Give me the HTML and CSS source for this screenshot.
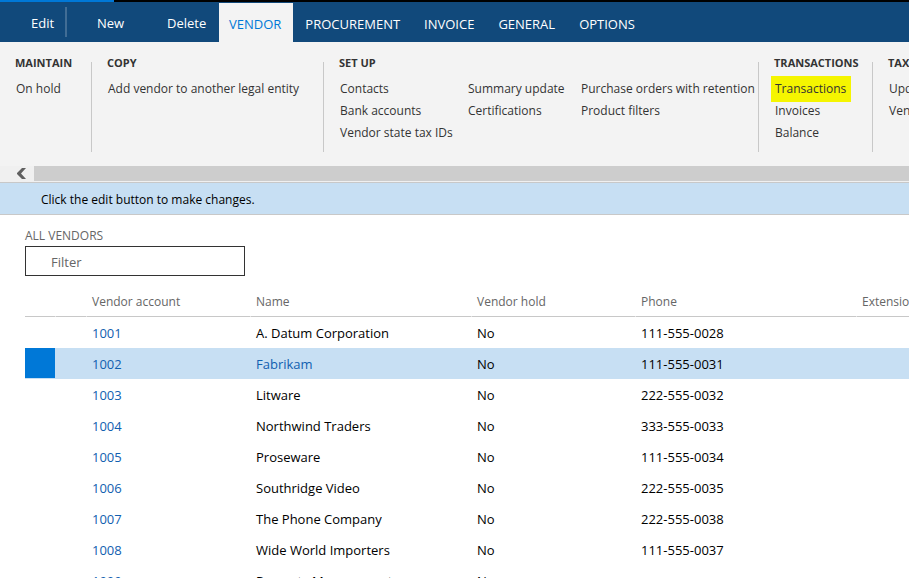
FILE: index.html
```html
<!DOCTYPE html>
<html lang="en">
<head>
<meta charset="utf-8">
<title>All vendors</title>
<link rel="stylesheet" href="styles.css">
</head>
<body>
<div class="progress"><div class="progress-fill"></div></div>
<header class="action-bar">
  <button class="action action-edit" type="button">Edit</button>
  <button class="action action-new" type="button">New</button>
  <button class="action action-delete" type="button">Delete</button>
  <nav class="tabs">
    <a class="tab tab-active" href="#">VENDOR</a>
    <a class="tab" href="#">PROCUREMENT</a>
    <a class="tab" href="#">INVOICE</a>
    <a class="tab" href="#">GENERAL</a>
    <a class="tab" href="#">OPTIONS</a>
  </nav>
</header>
<section class="ribbon">
  <div class="group group-maintain">
    <h2>MAINTAIN</h2>
    <div class="commands"><div class="stack"><button type="button">On hold</button></div></div>
  </div>
  <div class="group group-copy">
    <h2>COPY</h2>
    <div class="commands"><div class="stack"><button type="button">Add vendor to another legal entity</button></div></div>
  </div>
  <div class="group group-setup">
    <h2>SET UP</h2>
    <div class="commands">
      <div class="stack stack-contacts"><button type="button">Contacts</button><button type="button">Bank accounts</button><button type="button">Vendor state tax IDs</button></div>
      <div class="stack stack-summary"><button type="button">Summary update</button><button type="button">Certifications</button></div>
      <div class="stack"><button type="button">Purchase orders with retention</button><button type="button">Product filters</button></div>
    </div>
  </div>
  <div class="group group-transactions">
    <h2>TRANSACTIONS</h2>
    <div class="commands"><div class="stack"><button class="highlight" type="button">Transactions</button><button type="button">Invoices</button><button type="button">Balance</button></div></div>
  </div>
  <div class="group group-tax">
    <h2>TAX</h2>
    <div class="commands"><div class="stack"><button type="button">Update 1099</button><button type="button">Vendor settlement</button></div></div>
  </div>
</section>
<div class="scroller">
  <button class="scroll-left" type="button" aria-label="Scroll left">
    <svg width="10" height="12" viewBox="0 0 10 12"><path d="M5 0H9L4 5.500 9 11H5L0 6V5Z" fill="#606060"/></svg>
  </button>
  <div class="scroll-thumb"></div>
</div>
<p class="message">Click the edit button to make changes.</p>
<main class="content">
  <label class="list-title" for="filter">ALL VENDORS</label>
  <input class="filter" id="filter" type="text" placeholder="Filter">
  <table class="grid">
    <colgroup><col class="col-mark"><col class="col-status"><col class="col-narrow"><col class="col-wide"><col class="col-narrow"><col class="col-wide"><col class="col-narrow"></colgroup>
    <thead><tr><th></th><th></th><th>Vendor account</th><th>Name</th><th>Vendor hold</th><th>Phone</th><th>Extension</th></tr></thead>
    <tbody>
      <tr><td></td><td></td><td><a href="#">1001</a></td><td>A. Datum Corporation</td><td>No</td><td>111-555-0028</td><td></td></tr>
      <tr class="selected"><td><span class="mark"></span></td><td></td><td><a href="#">1002</a></td><td><a href="#">Fabrikam</a></td><td>No</td><td>111-555-0031</td><td></td></tr>
      <tr><td></td><td></td><td><a href="#">1003</a></td><td>Litware</td><td>No</td><td>222-555-0032</td><td></td></tr>
      <tr><td></td><td></td><td><a href="#">1004</a></td><td>Northwind Traders</td><td>No</td><td>333-555-0033</td><td></td></tr>
      <tr><td></td><td></td><td><a href="#">1005</a></td><td>Proseware</td><td>No</td><td>111-555-0034</td><td></td></tr>
      <tr><td></td><td></td><td><a href="#">1006</a></td><td>Southridge Video</td><td>No</td><td>222-555-0035</td><td></td></tr>
      <tr><td></td><td></td><td><a href="#">1007</a></td><td>The Phone Company</td><td>No</td><td>222-555-0038</td><td></td></tr>
      <tr><td></td><td></td><td><a href="#">1008</a></td><td>Wide World Importers</td><td>No</td><td>111-555-0037</td><td></td></tr>
      <tr><td></td><td></td><td><a href="#">1009</a></td><td>Property Management</td><td>No</td><td></td><td></td></tr>
    </tbody>
  </table>
</main>
</body>
</html>
```
FILE: styles.css
```css
* { box-sizing: border-box; }
body {
  margin: 0;
  height: 100vh;
  overflow: hidden;
  display: flex;
  flex-direction: column;
  background: #fff;
  color: #000;
  font: 13px/20px "Open Sans", "Noto Sans", sans-serif;
}
body > * { flex: none; }
button { padding: 0; border: 0; background: none; color: inherit; font: inherit; text-align: left; white-space: nowrap; }
a { color: #1160b0; text-decoration: none; }

.progress { height: 2px; background: #000; }
.progress-fill { width: 114px; height: 2px; background: #0078d7; }

.action-bar { display: flex; height: 40px; background: #11497b; color: #fff; }
.action { padding-top: 2px; }
.action-edit { width: 67px; height: 30px; margin-top: 5px; padding-left: 31px; border-right: 2px solid #416d95; }
.action-new { width: 70px; padding-left: 30px; }
.action-delete { width: 82px; padding-left: 30px; }
.tabs { display: flex; gap: 2px; padding-top: 1px; }
.tab { padding: 11px 12px 0 10px; color: #fff; }
.tab-active { background: #f3f3f3; color: #0078d7; }

.ribbon { display: flex; height: 124px; padding: 11px 0 14px; background: #f3f3f3; color: #333; font-size: 12px; overflow: hidden; }
.group { flex: none; position: relative; padding-left: 16px; }
.group + .group::before { content: ""; position: absolute; left: 0; top: 9px; bottom: 0; width: 1px; background: #c8c8c8; }
.group h2 { margin: 0; font-size: 11px; line-height: 20px; font-weight: 700; white-space: nowrap; }
.group-maintain { width: 91px; padding-left: 15px; }
.group-copy { width: 232px; }
.group-setup { width: 435px; }
.group-transactions { width: 114px; }
.group-tax { width: 160px; }
.commands { display: flex; padding: 5px 0 0 1px; }
.stack { display: flex; flex-direction: column; align-items: flex-start; }
.stack button { height: 22px; }
.stack-contacts { width: 128px; }
.stack-summary { width: 113px; }
.stack .highlight { height: 26px; margin: -2px 0 -2px -4px; padding: 0 5px 0 4px; background: #f5f500; }

.scroller { display: flex; height: 16px; padding-bottom: 1px; background: #f0f0f0; }
.scroll-left { display: flex; width: 34px; padding: 2px 0 0 17px; }
.scroll-thumb { flex: 1; background: #cdcdcd; }

.message { margin: 0; height: 33px; padding: 8px 41px 0; border: solid #c8c8c8; border-width: 1px 0; background: #c7dff3; font-size: 12px; line-height: 18px; }

.content { padding: 12px 0 0 25px; }
.list-title { display: block; height: 19px; line-height: 18px; font-size: 12px; color: #666; }
.filter { display: block; width: 220px; height: 30px; padding: 2px 25px 0; border: 1px solid #333; background: #fff; font: inherit; }
.filter::placeholder { color: #666; opacity: 1; }

.grid { width: 996px; margin-top: 11px; table-layout: fixed; border-collapse: separate; border-spacing: 0; }
.col-mark { width: 31px; }
.col-status { width: 31px; }
.col-narrow { width: 164px; }
.col-wide { width: 221px; }
.grid th { height: 30px; padding: 0 5px; border-bottom: 1px solid #c8c8c8; border-right: 1px solid #fff; color: #666; font-size: 12px; font-weight: 400; text-align: left; }
.grid td { height: 31px; padding: 1px 5px 0; line-height: 20px; }
.grid td:first-child { padding: 0; vertical-align: top; }
.selected td { background: #c7dff3; }
.mark { display: block; width: 30px; height: 30px; background: #0078d7; }
```
